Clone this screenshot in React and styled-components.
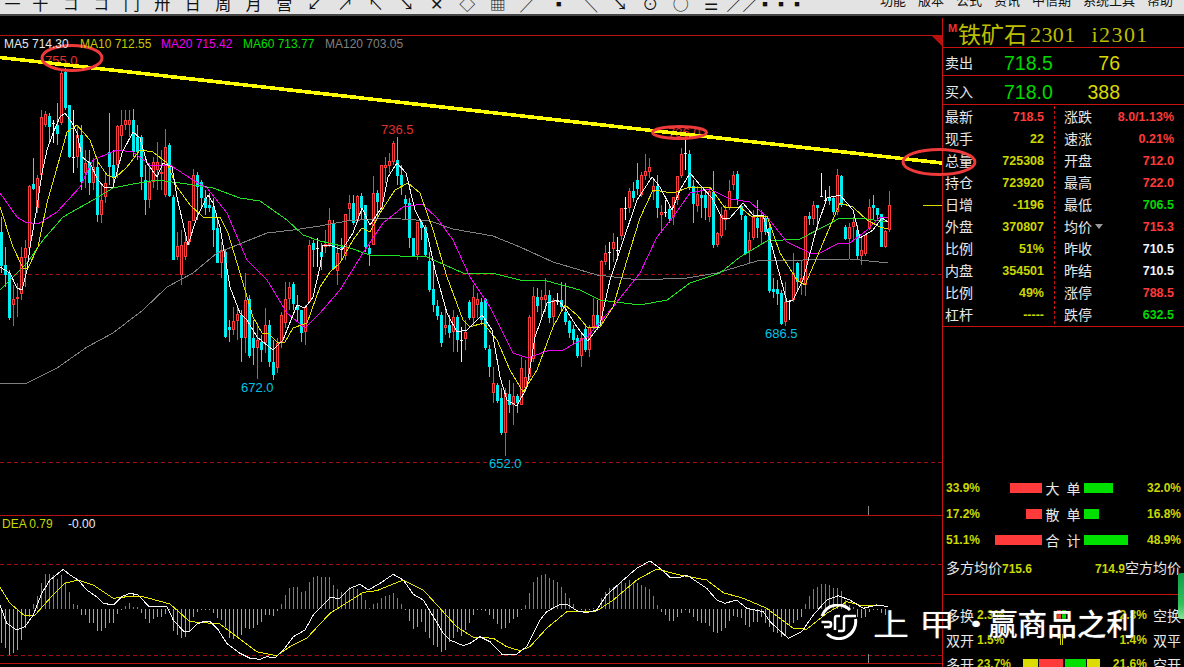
import React from 'react';
import styled, { createGlobalStyle } from 'styled-components';

const Global = createGlobalStyle`
  html, body { margin: 0; padding: 0; background: #000; overflow: hidden; }
  * { box-sizing: border-box; }
`;

const SANS = '"Liberation Sans", "Noto Sans CJK SC", sans-serif';
const CJK = '"Noto Sans CJK SC", "Liberation Sans", sans-serif';
const RED_LINE = '#bb1010';

/* ---------- data: [kind 0 red / 1 cyan / 2 white, high, top, bottom, low] ---------- */
const candles = [
[1,217,232,266,273],[1,247,265,275,287],[1,270,273,318,320],[0,285,299,305,326],[0,283,297,299,317],[0,247,257,294,300],[0,240,248,258,287],[0,185,186,248,250],[1,158,184,189,190],[0,175,178,208,213],
[0,110,117,175,177],[0,111,114,125,127],[1,113,116,127,143],[2,120,123,124,143],[1,103,125,134,145],[0,70,73,123,125],[1,68,72,108,110],[1,105,105,157,158],[2,110,157,158,173],[0,125,135,157,168],
[1,125,135,182,190],[0,150,163,173,188],[1,150,162,183,195],[0,158,167,183,190],[1,158,167,215,222],[0,183,200,215,223],[0,173,183,197,203],[1,113,152,167,185],[1,150,165,178,187],[0,125,126,165,178],
[0,110,125,136,150],[0,110,120,125,130],[0,110,120,125,137],[1,109,120,152,157],[1,125,137,152,160],[1,135,137,177,190],[1,165,180,200,215],[0,163,182,200,208],[0,157,162,182,188],[0,142,162,170,190],
[0,150,172,173,190],[0,129,147,195,197],[1,143,145,196,197],[1,195,197,260,260],[0,232,246,257,260],[0,230,245,275,285],[0,232,242,257,260],[0,221,221,242,245],[0,169,175,221,221],[1,172,175,187,220],
[1,180,182,198,207],[1,190,198,208,215],[1,193,205,208,212],[1,198,207,230,247],[1,218,228,263,263],[0,242,250,263,278],[1,250,252,337,338],[1,320,327,330,342],[0,307,321,330,335],[0,307,314,321,340],
[1,310,315,338,362],[0,273,300,338,353],[1,295,299,356,358],[1,320,338,348,365],[0,323,340,348,379],[1,335,342,350,362],[0,308,325,343,353],[1,320,325,362,367],[1,340,362,375,380],[0,338,343,368,373],
[0,312,315,343,348],[0,282,299,323,328],[0,282,287,299,310],[1,282,284,304,310],[1,295,305,310,322],[1,310,310,333,342],[0,305,307,332,345],[0,240,245,302,303],[1,240,243,250,267],[2,238,248,249,267],
[1,243,252,257,270],[0,230,244,247,253],[0,208,220,245,247],[1,220,223,269,270],[0,245,253,271,285],[1,238,247,248,260],[0,214,214,256,260],[0,195,203,209,220],[1,195,203,223,225],[0,195,196,220,223],
[1,193,196,208,220],[1,205,205,247,252],[1,245,248,254,266],[0,176,193,245,245],[1,190,193,202,217],[0,165,165,208,210],[0,157,165,168,183],[0,153,161,166,173],[0,141,143,162,165],[1,137,160,176,185],
[1,165,175,185,195],[1,195,199,204,220],[1,198,203,238,248],[1,238,238,256,257],[0,222,222,255,260],[1,220,222,228,240],[1,225,227,255,257],[1,252,261,290,292],[1,265,289,305,312],[1,300,306,316,320],
[1,312,315,343,347],[0,310,325,328,335],[1,315,325,333,338],[0,310,317,332,352],[1,315,317,340,352],[2,327,340,341,362],[0,320,332,339,350],[1,300,302,318,320],[0,285,297,318,325],[0,293,299,305,318],
[1,298,302,320,325],[1,298,299,348,350],[1,345,349,367,377],[0,367,383,393,403],[1,383,385,401,403],[1,388,398,433,435],[0,388,393,433,456],[1,380,394,405,413],[0,383,396,405,425],[1,394,396,403,413],
[0,357,368,405,405],[0,360,377,388,392],[0,315,317,377,380],[0,287,296,359,362],[1,288,297,306,312],[0,290,297,300,318],[0,278,295,300,312],[1,290,295,318,323],[0,298,300,317,327],[2,293,301,302,305],
[1,282,300,307,312],[1,283,312,322,325],[1,320,321,333,338],[1,325,329,340,345],[1,335,338,356,358],[0,333,338,356,367],[1,325,329,350,352],[0,325,327,350,357],[0,298,315,327,330],[1,300,315,328,330],
[0,260,261,323,325],[0,245,253,262,265],[2,242,252,253,270],[0,233,242,249,262],[2,237,250,251,260],[0,208,208,236,240],[2,197,208,209,220],[0,188,191,208,213],[1,182,191,198,202],[1,163,180,189,195],
[0,172,175,195,197],[0,154,171,176,180],[0,158,167,172,178],[0,178,186,192,200],[1,175,186,208,218],[0,205,212,215,233],[2,200,212,213,217],[1,205,209,219,223],[0,197,197,217,225],[0,176,176,200,205],
[0,148,154,176,178],[2,139,153,154,170],[1,150,154,187,190],[1,180,186,204,223],[0,186,194,206,212],[1,186,195,198,218],[1,190,195,208,220],[0,188,191,217,222],[1,171,192,245,248],[0,232,233,245,247],
[0,207,215,236,238],[0,205,210,220,230],[0,180,191,208,210],[0,171,175,185,190],[1,171,174,199,205],[1,205,206,215,220],[1,215,216,254,255],[0,232,240,251,263],[0,210,217,238,240],[1,200,218,228,238],
[0,210,215,232,245],[1,215,218,232,235],[1,225,228,291,293],[1,278,289,292,298],[1,280,289,294,305],[1,290,293,324,325],[0,282,302,322,326],[2,300,301,302,320],[0,253,273,300,302],[1,262,263,282,290],
[0,260,278,282,295],[0,216,216,285,296],[1,212,216,219,225],[0,201,205,219,225],[1,205,205,208,230],[2,173,196,197,197],[2,190,200,201,202],[1,186,197,201,205],[1,197,198,212,215],[0,169,175,212,215],
[1,175,176,205,207],[1,225,227,239,240],[0,223,227,239,259],[0,217,222,227,240],[1,225,230,256,260],[0,238,250,256,265],[0,235,235,254,256],[0,199,207,229,230],[1,195,205,208,220],[1,208,208,215,220],
[1,214,214,247,247],[0,230,231,247,248],[0,191,205,230,232],
];

const ma5 = [[0,267],[10,273],[17,288],[22,290],[27,270],[30,247],[37,207],[42,173],[47,150],[53,133],[60,117],[65,113],[72,123],[77,133],[82,157],[90,163],[98,180],[105,188],[113,187],[122,153],[133,132],[140,138],[147,163],[157,177],[163,163],[172,167],[177,197],[188,245],[197,217],[208,195],[213,203],[220,227],[230,287],[240,313],[247,320],[257,337],[273,350],[283,340],[297,305],[305,308],[313,297],[320,267],[323,245],[330,245],[342,250],[353,233],[362,208],[370,225],[382,207],[388,177],[397,163],[406,173],[415,210],[427,233],[435,270],[447,313],[457,332],[467,330],[482,315],[492,330],[500,377],[507,400],[517,406],[527,387],[535,337],[547,303],[558,300],[565,308],[577,327],[588,341],[600,325],[610,280],[620,250],[637,200],[652,177],[660,187],[672,210],[680,190],[690,173],[700,185],[712,198],[722,218],[730,218],[743,203],[753,215],[763,215],[773,250],[787,302],[793,300],[803,280],[817,227],[827,198],[840,195],[853,210],[860,238],[873,230],[882,218],[888,222]];
const ma10 = [[0,207],[13,247],[23,268],[28,268],[38,247],[47,203],[60,157],[67,132],[77,125],[90,140],[98,162],[107,175],[115,178],[127,167],[140,150],[153,152],[167,163],[177,187],[190,205],[203,217],[220,217],[228,233],[240,273],[253,317],[262,333],[268,333],[277,342],[285,342],[293,328],[307,323],[320,287],[330,272],[340,263],[353,240],[362,228],[370,232],[380,213],[395,190],[408,183],[420,193],[433,230],[447,277],[463,320],[470,327],[483,323],[497,340],[510,370],[523,392],[537,370],[553,327],[565,305],[577,315],[587,327],[600,327],[613,307],[627,260],[640,218],[653,190],[673,193],[690,187],[710,187],[725,208],[740,207],[752,217],[767,216],[780,253],[797,280],[805,285],[823,243],[840,203],[853,207],[867,220],[880,227],[888,229]];
const ma20 = [[0,193],[17,217],[25,222],[38,224],[57,212],[80,187],[93,160],[117,150],[133,152],[150,165],[170,165],[193,180],[207,188],[227,213],[247,260],[267,280],[287,313],[305,328],[320,313],[340,290],[363,253],[383,223],[403,207],[422,204],[437,218],[453,240],[470,277],[490,307],[513,353],[528,358],[547,351],[563,350],[587,337],[613,307],[640,273],[657,237],[673,217],[690,193],[710,189],[730,199],[750,202],[767,217],[787,242],[810,253],[820,253],[837,244],[850,243],[867,230],[880,217],[888,217]];
const ma60 = [[0,290],[27,263],[43,240],[63,217],[93,200],[113,188],[133,184],[157,180],[180,183],[213,188],[240,198],[260,201],[287,220],[303,235],[320,241],[347,247],[370,255],[400,256],[427,257],[463,273],[492,273],[520,280],[547,281],[580,290],[600,300],[640,305],[667,300],[690,283],[720,273],[740,257],[767,241],[800,239],[827,225],[840,218],[867,219],[888,222]];
const ma120 = [[0,383],[27,383],[57,368],[87,347],[113,333],[143,310],[167,287],[193,273],[217,253],[267,233],[293,230],[320,226],[347,221],[387,218],[430,221],[453,229],[493,236],[520,247],[553,262],[597,275],[640,280],[687,278],[717,273],[757,261],[850,259],[888,263]];

const hist = [430,445,465,460,450,420,385,350,312,288,248,222,222,225,237,225,245,275,312,315,345,345,368,370,392,392,385,370,370,342,330,318,308,322,322,340,358,368,358,352,352,342,330,392,405,415,412,395,350,335,330,328,328,340,355,360,380,415,418,410,405,385,388,385,375,365,345,345,348,332,312,285,263,260,260,275,272,247,230,228,232,232,232,255,268,275,280,262,265,268,280,300,325,312,308,295,288,285,280,295,312,328,362,388,382,365,395,415,435,442,455,450,425,415,395,408,390,370,345,330,
330,332,345,358,372,388,385,370,358,350,330,315,280,245,232,225,222,235,240,247,260,278,295,312,326,330,335,330,325,325,295,275,265,260,258,245,250,240,245,250,255,260,268,288,315,335,345,362,362,350,338,330,340,352,362,370,370,378,395,398,392,385,362,348,350,355,375,380,365,365,352,370,380,395,400,412,405,375,368,360,350,312,288,268,262,252,252,255,265,265,272,300,315,322,350,355,350,335,328,328,340,345];

const difA = [[0,315],[20,370],[50,390],[75,380],[100,345],[125,280],[150,240],[175,220],[190,208],[210,225],[235,240],[260,270],[290,290],[310,310],[340,315],[365,290],[390,280],[415,285],[445,318],[500,318],[520,360],[550,393],[570,393],[590,372],[610,365],[630,365],[655,390],[680,430],[720,460],[750,475],[780,478],[800,470],[825,473],[850,450],[880,410],[915,390],[940,345],[990,293],[1020,295],[1050,265],[1080,253],[1105,270],[1140,250],[1180,223],[1210,240],[1240,283],[1270,300],[1300,350],[1330,400],[1350,420],[1390,437],[1410,430],[1440,410]];
const difB = [[30,425],[65,462],[110,462],[140,440],[180,360],[200,335],[240,313],[265,315],[290,332],[320,338],[350,330],[380,285],[430,240],[470,205],[510,183],[540,205],[570,232],[600,232],[620,225],[680,265],[710,300],[735,310],[770,300],[800,325],[850,335],[870,365],[925,415],[965,395],[1000,345],[1040,300],[1075,287],[1110,300],[1150,325],[1190,315],[1225,320]];
const deaA = [[0,262],[30,310],[75,348],[105,345],[150,295],[195,250],[235,240],[280,255],[340,295],[400,288],[430,290],[510,312],[570,365],[600,367],[660,372],[710,410],[770,455],[830,467],[870,440],[920,415],[990,340],[1090,277],[1130,272],[1210,240],[1270,270],[1320,325],[1370,380],[1420,412],[1440,412]];
const deaB = [[40,415],[80,440],[120,452],[150,440],[200,385],[260,335],[350,333],[400,300],[470,240],[530,207],[600,225],[680,240],[730,278],[790,295],[860,325],[900,355],[940,385],[980,388],[1040,340],[1100,305],[1150,318],[1190,315],[1225,320]];

const toPts = (arr) => arr.map((p) => p.join(',')).join(' ');
const macdPts = (a, b) => [
  ...a.map(([x, y]) => [+(x / 3).toFixed(1), +(500 + y / 3).toFixed(1)]),
  ...b.map(([x, y]) => [+(480 + x / 3).toFixed(1), +(500 + y / 3).toFixed(1)]),
];

/* ---------- layout ---------- */
const Page = styled.div`
  position: relative;
  width: 1184px;
  height: 667px;
  overflow: hidden;
  background: #000;
  display: flex;
  flex-direction: column;
`;
const Toolbar = styled.div`
  height: 16px;
  flex: none;
  background: #e3e3e3;
  border-bottom: 2px solid #454545;
  display: flex;
  justify-content: space-between;
  overflow: hidden;
  font: 16px ${CJK};
  color: #111;
`;
const ToolGroup = styled.div`
  display: flex;
  align-items: flex-start;
  gap: ${(p) => p.$gap || 0}px;
  padding: ${(p) => p.$pad || '0'};
`;
const ToolGlyph = styled.span`
  width: ${(p) => p.$w || 30.5}px;
  flex: none;
  text-align: center;
  line-height: 16px;
  height: 16px;
  transform: translateY(-5px);
  white-space: nowrap;
`;
const MenuItem = styled.span`
  line-height: 14px;
  height: 14px;
  transform: translateY(-7px);
  font-size: 13px;
  white-space: nowrap;
`;
const Body = styled.div`
  flex: 1;
  display: flex;
  min-height: 0;
`;
const ChartColumn = styled.div`
  width: 942px;
  flex: none;
  display: flex;
  flex-direction: column;
`;
const HeaderBand = styled.div`
  height: 20px;
  flex: none;
  border-bottom: 1px solid ${RED_LINE};
  position: relative;
`;
const CornerMark = styled.i`
  position: absolute;
  right: 0;
  top: 20px;
  width: 0;
  height: 0;
  border-top: 10px solid ${RED_LINE};
  border-left: 10px solid transparent;
  z-index: 2;
`;
const PricePane = styled.div`
  position: relative;
  height: 480px;
  flex: none;
  border-bottom: 1px solid ${RED_LINE};
`;
const MacdPane = styled.div`
  position: relative;
  height: 148px;
  flex: none;
  border-bottom: 1px solid ${RED_LINE};
`;
const Legend = styled.div`
  position: absolute;
  left: 4px;
  top: 1px;
  display: flex;
  gap: 10px;
  font: 12px/14px ${SANS};
  white-space: nowrap;
  z-index: 1;
`;
const LegendItem = styled.span`
  color: ${(p) => p.$c};
  width: ${(p) => p.$w}px;
`;
const MacdLegend = styled(Legend)`
  left: 2px;
  top: 1px;
  gap: 12px;
`;
const ChartSvg = styled.svg`
  display: block;
  width: 942px;
  height: 100%;
`;
const SidePanel = styled.div`
  flex: 1;
  margin-top: 2px;
  border-left: 1px solid #c81212;
  display: flex;
  flex-direction: column;
  color: #e8e8e8;
  font: 14px ${CJK};
`;
const TitleRow = styled.div`
  height: 30px;
  flex: none;
  border-bottom: 1px solid #c81212;
  display: flex;
  align-items: flex-start;
  padding-left: 5px;
  color: #bcbc00;
  white-space: nowrap;
`;
const MBadge = styled.span`
  font: bold 11px/14px ${SANS};
  color: #ee3030;
  width: 10px;
  margin-top: 3px;
`;
const TitleText = styled.span`
  font: 23px/28px ${CJK};
  margin-top: 1px;
  width: 72px;
`;
const TitleCode = styled.span`
  font: 22px/30px "Liberation Serif", serif;
  margin-top: 2px;
  letter-spacing: 0.4px;
`;
const TitleSymbol = styled(TitleCode)`
  margin-left: 16px;
  letter-spacing: 1.4px;
`;
const QuoteRow = styled.div`
  height: ${(p) => p.$h}px;
  flex: none;
  border-bottom: 1px solid #c81212;
  display: flex;
  align-items: center;
  padding-left: 2px;
  padding-top: 1px;
`;
const QuoteLabel = styled.span`
  width: 59px;
  line-height: 16px;
`;
const QuotePrice = styled.span`
  width: 50px;
  margin-top: 2px;
  font: 19.5px/24px ${SANS};
  color: #00d800;
`;
const QuoteVol = styled.span`
  width: 66px;
  margin-top: 2px;
  text-align: right;
  font: 19.5px/24px ${SANS};
  color: #d8d800;
`;
const StatGrid = styled.div`
  height: 222px;
  flex: none;
  border-bottom: 1px solid #c81212;
  padding-top: 1px;
  display: grid;
  grid-template-columns: 111px 130px;
`;
const StatCol = styled.div`
  display: flex;
  flex-direction: column;
  ${(p) => p.$right && 'border-left: 1px dashed #c81212; height: 218px;'}
  padding: ${(p) => (p.$right ? '0 10px 0 9px' : '0 10px 0 2px')};
`;
const StatRow = styled.div`
  height: 22px;
  flex: none;
  display: flex;
  align-items: center;
  justify-content: space-between;
`;
const StatValue = styled.span`
  font: bold 12.5px/16px ${SANS};
  color: ${(p) => p.$c};
`;
const StatLabel = styled.span`
  position: relative;
  top: -1px;
  line-height: 16px;
`;
const DownMark = styled.i`
  position: absolute;
  left: 31px;
  top: 6px;
  width: 0;
  height: 0;
  border-top: 5px solid #9a9a9a;
  border-left: 4px solid transparent;
  border-right: 4px solid transparent;
`;
const Spacer = styled.div`
  height: 148px;
  flex: none;
`;
const FlowRow = styled.div`
  height: 26px;
  flex: none;
  display: grid;
  grid-template-columns: 96px 42px 1fr;
  align-items: center;
  padding: 0 3px;
`;
const Pct = styled.span`
  font: bold 12px/14px ${SANS};
  color: #cbd800;
`;
const FlowSide = styled.div`
  display: flex;
  justify-content: space-between;
  align-items: center;
`;
const Bar = styled.i`
  display: block;
  height: ${(p) => p.$h || 10}px;
  width: ${(p) => p.$w}px;
  margin-right: ${(p) => p.$mr || 0}px;
  background: ${(p) => p.$c};
`;
const FlowName = styled.span`
  text-align: center;
  word-spacing: 4px;
  line-height: 16px;
`;
const AvgRow = styled.div`
  height: 27px;
  flex: none;
  display: flex;
  align-items: center;
  justify-content: space-between;
  padding: 0 3px;
  white-space: nowrap;
`;
const BottomBlock = styled.div`
  border-top: 1px solid #c81212;
  margin-left: 1px;
  margin-top: 14px;
  padding-top: 8px;
  flex: none;
`;
const TradeRow = styled.div`
  height: 24.5px;
  display: grid;
  grid-template-columns: 76px 78px 1fr;
  align-items: center;
  padding: 0 3px 0 2px;
  white-space: nowrap;
`;
const TradeSide = styled.span`
  display: flex;
  gap: 3px;
  align-items: center;
  justify-content: ${(p) => (p.$end ? 'flex-end' : 'flex-start')};
`;
const TradeBars = styled.span`
  display: flex;
  gap: 1px;
  justify-content: center;
  align-items: center;
`;
const ScrollThumb = styled.i`
  position: absolute;
  left: 1178px;
  top: 573px;
  width: 6px;
  height: 46px;
  border-radius: 3px 0 0 3px;
  background: linear-gradient(#0e9d4a, #34c25c 70%, #8ae59a);
`;
const Annotations = styled.svg`
  position: absolute;
  left: 0;
  top: 0;
  width: 1184px;
  height: 667px;
  pointer-events: none;
`;
const Watermark = styled.div`
  position: absolute;
  left: 820px;
  top: 604px;
  height: 36px;
  display: flex;
  align-items: center;
  color: #fff;
  font: 500 29.6px/36px ${CJK};
  text-shadow: 0 0 2px #333;
  white-space: nowrap;
`;
const LogoSvg = styled.svg`
  width: 38px;
  height: 36px;
  flex: none;
  margin-right: 15px;
`;
const WideChar = styled.span`
  display: inline-block;
  width: ${(p) => p.$w}px;
  transform: scaleX(1.22);
  transform-origin: left center;
  font-weight: 400;
  position: relative;
  top: 1px;
`;
const Slogan = styled.span`
  position: relative;
  top: 1px;
`;

const Series = ({ pts, c }) => (
  <polyline points={toPts(pts)} fill="none" stroke={c} strokeWidth="1" shapeRendering="crispEdges" />
);

const Candle = ({ d, i }) => {
  const [k, h, t, b, l] = d;
  const x = 4 * i;
  const color = k === 0 ? '#ff3a3a' : k === 1 ? '#00eef2' : '#f2f2f2';
  return (
    <g shapeRendering="crispEdges">
      <rect x={x + 1} y={h} width="1" height={Math.max(l - h, 1)} fill={color} />
      {k === 0 ? (
        <rect x={x + 0.5} y={t + 0.5} width="2" height={Math.max(b - t - 1, 1)} fill="#000" stroke={color} />
      ) : (
        <rect x={x} y={t} width="3" height={Math.max(b - t, 1)} fill={color} />
      )}
    </g>
  );
};

const PriceLabel = ({ x, y, c, children }) => (
  <text x={x} y={y} fill={c} fontFamily="Liberation Sans, sans-serif" fontSize="13">{children}</text>
);

const DashLine = ({ y }) => (
  <line x1="0" x2="942" y1={y} y2={y} stroke="#a30d0d" strokeWidth="1" strokeDasharray="4 3" shapeRendering="crispEdges" />
);

const left = [
  ['最新', '718.5', '#ff3a3a'], ['现手', '22', '#cbd800'], ['总量', '725308', '#cbd800'], ['持仓', '723920', '#cbd800'],
  ['日增', '-1196', '#cbd800'], ['外盘', '370807', '#cbd800'], ['比例', '51%', '#cbd800'], ['内盘', '354501', '#cbd800'],
  ['比例', '49%', '#cbd800'], ['杠杆', '-----', '#cbd800'],
];
const right = [
  ['涨跌', '8.0/1.13%', '#ff3a3a'], ['速涨', '0.21%', '#ff3a3a'], ['开盘', '712.0', '#ff3a3a'], ['最高', '722.0', '#ff3a3a'],
  ['最低', '706.5', '#00d800'], ['均价', '715.3', '#ff3a3a', true], ['昨收', '710.5', '#f0f4ff'], ['昨结', '710.5', '#f0f4ff'],
  ['涨停', '788.5', '#ff3a3a'], ['跌停', '632.5', '#00d800'],
];
const flows = [
  ['33.9%', 32, '大 单', 29, '32.0%'],
  ['17.2%', 16, '散 单', 15, '16.8%'],
  ['51.1%', 47, '合 计', 44, '48.9%'],
];

const tools = ['一', '十', 'コ', 'コ', '门', '卅', '日', '周', '月', '营', '↙', '↗', '↖', '↘', '✕', '◇', '▦', '╱', '▪', '╲', '↘', '⊙', '○', '☰', '∕∕', '▪▪▪'];
const menus = ['功能', '版本', '公式', '资讯', '中信期', '系统工具', '帮助'];

export default function App() {
  return (
    <Page>
      <Global />
      <Toolbar>
        <ToolGroup>
          {tools.map((t, i) => <ToolGlyph key={i} $w={i === 0 ? 25 : 30.5}>{t}</ToolGlyph>)}
        </ToolGroup>
        <ToolGroup $gap={12} $pad="0 11px 0 0">
          {menus.map((t) => <MenuItem key={t}>{t}</MenuItem>)}
        </ToolGroup>
      </Toolbar>
      <Body>
        <ChartColumn>
          <HeaderBand><CornerMark /></HeaderBand>
          <PricePane>
            <Legend>
              <LegendItem $c="#e8e8e8" $w={66}>MA5 714.30</LegendItem>
              <LegendItem $c="#c8c800" $w={71}>MA10 712.55</LegendItem>
              <LegendItem $c="#f000f0" $w={72}>MA20 715.42</LegendItem>
              <LegendItem $c="#00e000" $w={72}>MA60 713.77</LegendItem>
              <LegendItem $c="#808080" $w={80}>MA120 703.05</LegendItem>
            </Legend>
            <ChartSvg viewBox="0 36 942 479" preserveAspectRatio="none">
              <DashLine y={274.5} />
              <DashLine y={462.5} />
              {candles.map((d, i) => <Candle key={i} d={d} i={i} />)}
              <Series pts={ma120} c="#808080" />
              <Series pts={ma60} c="#22e022" />
              <Series pts={ma20} c="#f000f0" />
              <Series pts={ma10} c="#e0e000" />
              <Series pts={ma5} c="#f4f4f4" />
              <line x1="923" x2="942" y1="205.5" y2="205.5" stroke="#d8d800" />
              <line x1="868.5" x2="868.5" y1="506" y2="515" stroke="#888" />
              <PriceLabel x={45} y={65} c="#e03030">755.0</PriceLabel>
              <PriceLabel x={381} y={134} c="#e03030">736.5</PriceLabel>
              <PriceLabel x={668} y={137} c="#e03030">736.0</PriceLabel>
              <PriceLabel x={241} y={392} c="#00c4e8">672.0</PriceLabel>
              <PriceLabel x={489} y={468} c="#00c4e8">652.0</PriceLabel>
              <PriceLabel x={765} y={338} c="#00c4e8">686.5</PriceLabel>
            </ChartSvg>
          </PricePane>
          <MacdPane>
            <MacdLegend>
              <LegendItem $c="#c8d800" $w={54}>DEA 0.79</LegendItem>
              <LegendItem $c="#e8eeff" $w={40}>-0.00</LegendItem>
            </MacdLegend>
            <ChartSvg viewBox="0 516 942 147" preserveAspectRatio="none">
              <DashLine y={564.5} />
              <DashLine y={655.5} />
              {hist.map((v, i) => {
                const y = 500 + v / 3;
                const top = Math.min(y, 609);
                return (
                  <rect key={i} x={4 * i + 1} y={top} width="1" height={Math.max(Math.abs(y - 609), 0.6)}
                    fill={v < 328 ? '#e85050' : '#22d8e8'} shapeRendering="crispEdges" />
                );
              })}
              <Series pts={macdPts(deaA, deaB)} c="#e8e800" />
              <Series pts={macdPts(difA, difB)} c="#f4f4f4" />
              <line x1="868.5" x2="868.5" y1="654" y2="663" stroke="#888" />
            </ChartSvg>
          </MacdPane>
        </ChartColumn>
        <SidePanel>
          <TitleRow>
            <MBadge>M</MBadge>
            <TitleText>铁矿石</TitleText>
            <TitleCode>2301</TitleCode>
            <TitleSymbol>i2301</TitleSymbol>
          </TitleRow>
          <QuoteRow $h={28}>
            <QuoteLabel>卖出</QuoteLabel><QuotePrice>718.5</QuotePrice><QuoteVol>76</QuoteVol>
          </QuoteRow>
          <QuoteRow $h={29}>
            <QuoteLabel>买入</QuoteLabel><QuotePrice>718.0</QuotePrice><QuoteVol>388</QuoteVol>
          </QuoteRow>
          <StatGrid>
            <StatCol>
              {left.map(([a, b, c], i) => (
                <StatRow key={i}><StatLabel>{a}</StatLabel><StatValue $c={c}>{b}</StatValue></StatRow>
              ))}
            </StatCol>
            <StatCol $right>
              {right.map(([a, b, c, m], i) => (
                <StatRow key={i}>
                  <StatLabel>{a}{m && <DownMark />}</StatLabel>
                  <StatValue $c={c}>{b}</StatValue>
                </StatRow>
              ))}
            </StatCol>
          </StatGrid>
          <Spacer />
          {flows.map(([a, w1, n, w2, b]) => (
            <FlowRow key={n}>
              <FlowSide><Pct>{a}</Pct><Bar $w={w1} $c="#ff3a3a" /></FlowSide>
              <FlowName>{n}</FlowName>
              <FlowSide><Bar $w={w2} $c="#00e000" /><Pct>{b}</Pct></FlowSide>
            </FlowRow>
          ))}
          <AvgRow>
            <span>多方均价<Pct>715.6</Pct></span>
            <span><Pct>714.9</Pct>空方均价</span>
          </AvgRow>
          <BottomBlock>
            <TradeRow>
              <TradeSide>多换<Pct>2.3%</Pct></TradeSide>
              <TradeBars>
                <Bar $w={4} $h={11} $c="#ff3a3a" /><Bar $w={4} $h={11} $c="#00e000" />
              </TradeBars>
              <TradeSide $end><Pct>2.3%</Pct>&nbsp;空换</TradeSide>
            </TradeRow>
            <TradeRow>
              <TradeSide>双开<Pct>1.5%</Pct></TradeSide>
              <TradeBars><Bar $w={1} $h={11} $c="#d8d800" /><Bar $w={1} $h={11} $c="#d8d800" /></TradeBars>
              <TradeSide $end><Pct>1.4%</Pct>&nbsp;双平</TradeSide>
            </TradeRow>
            <TradeRow>
              <TradeSide>多开<Pct>23.7%</Pct></TradeSide>
              <TradeBars>
                <Bar $w={15} $c="#dcdc00" /><Bar $w={24} $mr={1} $c="#ff3a3a" /><Bar $w={21} $c="#00e000" /><Bar $w={13} $c="#dcdc00" />
              </TradeBars>
              <TradeSide $end><Pct>21.6%</Pct>&nbsp;空开</TradeSide>
            </TradeRow>
          </BottomBlock>
        </SidePanel>
      </Body>

      <ScrollThumb />
      <Annotations viewBox="0 0 1184 667">
        <line x1="0" y1="57.5" x2="942" y2="163" stroke="#ffff00" strokeWidth="3.6" shapeRendering="crispEdges" />
        <ellipse cx="72" cy="58" rx="30" ry="12.5" fill="none" stroke="#ee3a3a" strokeWidth="3" />
        <ellipse cx="679.5" cy="132.5" rx="27" ry="6" fill="none" stroke="#ee3a3a" strokeWidth="3" />
        <ellipse cx="939" cy="162" rx="36" ry="12.5" fill="none" stroke="#ee3a3a" strokeWidth="3" />
      </Annotations>
      <Watermark>
        <LogoSvg viewBox="0 0 38 36" fill="none" stroke="#fff" strokeWidth="3">
          <path d="M2 12 A17 17 0 0 1 30 6" />
          <path d="M35.5 15 A17 17 0 0 1 7 30" />
          <path d="M1.5 18 H9 Q11 18 11 20 V21 Q11 23 9 23 H4" strokeWidth="2.5" />
          <path d="M15 26 V14 Q15 12 17 12 H20" strokeWidth="2.5" />
          <path d="M18 27 H22 Q24 27 24 25 V14 Q24 12 26 12 H36" strokeWidth="2.5" />
        </LogoSvg>
        <WideChar $w={46}>上</WideChar>
        <WideChar $w={39}>甲</WideChar>
        <WideChar $w={30}>·</WideChar>
        <Slogan>赢商品之利</Slogan>
      </Watermark>
    </Page>
  );
}
